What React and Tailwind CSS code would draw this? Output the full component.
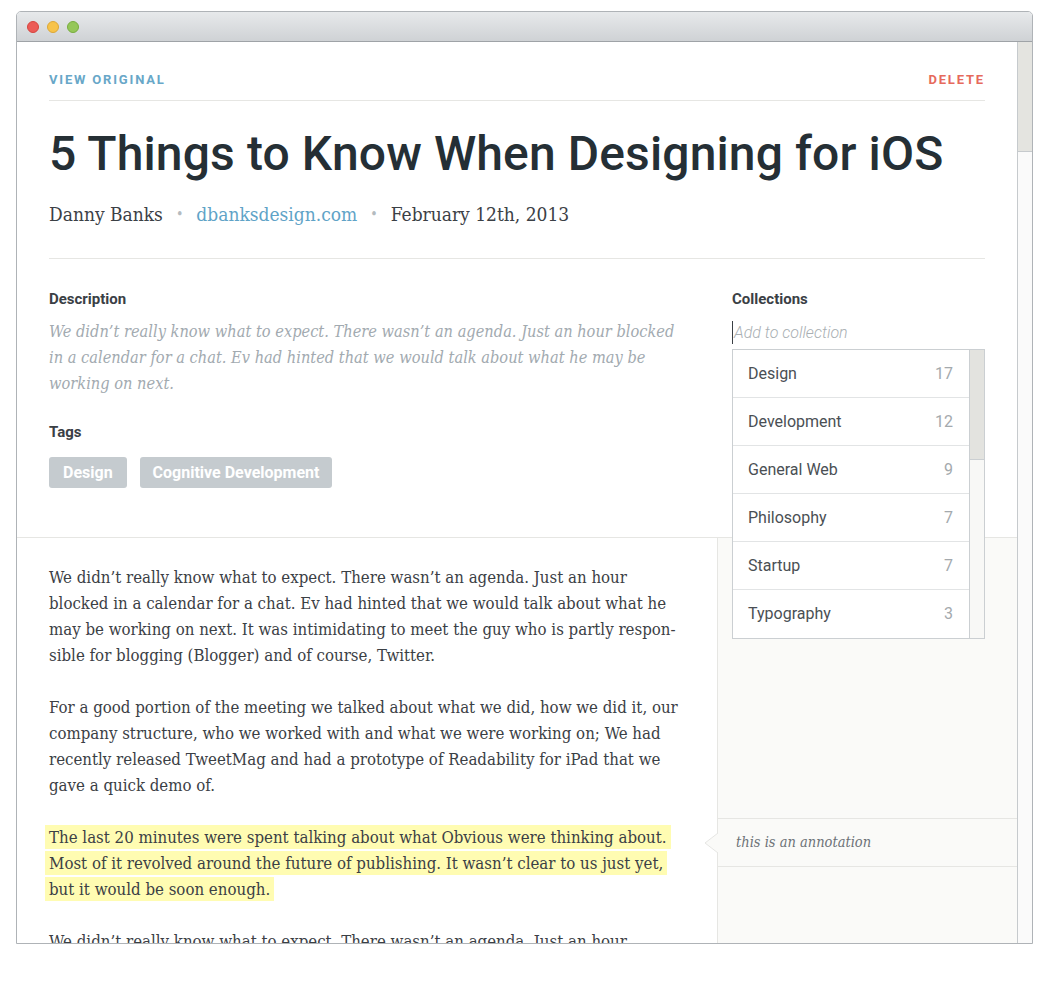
import React from "react";

const collections = [
  { name: "Design", count: 17 },
  { name: "Development", count: 12 },
  { name: "General Web", count: 9 },
  { name: "Philosophy", count: 7 },
  { name: "Startup", count: 7 },
  { name: "Typography", count: 3 },
];

const serif = "font-['DejaVu_Serif_Condensed','DejaVu_Serif',serif] font-stretch-condensed";
const sans = "font-['Roboto','Liberation_Sans',sans-serif]";

function TitleBar() {
  return (
    <div className="h-[30px] shrink-0 flex items-center gap-2 px-[10px] border-b border-[#9fa3a7] bg-gradient-to-b from-[#e7e9eb] to-[#cfd2d5]">
      <span className="w-3 h-3 rounded-full bg-[#ec5b57] border border-[#d5453f]" />
      <span className="w-3 h-3 rounded-full bg-[#f7c34a] border border-[#dca837]" />
      <span className="w-3 h-3 rounded-full bg-[#95c759] border border-[#78ad3e]" />
    </div>
  );
}

function CollectionsPicker() {
  return (
    <div className="relative">
      <div className="h-[23px] border-l border-[#3a3f44] pl-px text-[16px] leading-[23px] italic font-light text-[#a9afb3]">
        Add to collection
      </div>
      {/* Dropdown */}
      <div className="absolute left-0 top-[28px] w-[253px] h-[290px] flex border border-[#cbcfd2] bg-white z-10">
        <ul className="flex-1">
          {collections.map((c, i) => (
            <li
              key={c.name}
              className={`h-12 flex items-center justify-between pl-[15px] pr-4 text-[16px] text-[#4a4f54] ${
                i < collections.length - 1 ? "border-b border-[#e2e4e5]" : ""
              }`}
            >
              <span>{c.name}</span>
              <span className="text-[#a4a9ad]">{c.count}</span>
            </li>
          ))}
        </ul>
        <div className="w-[15px] border-l border-[#cbcfd2] bg-[#f8f8f6] flex flex-col">
          <div className="h-[110px] bg-[#e3e3df] border-b border-[#cbcfd2]" />
        </div>
      </div>
    </div>
  );
}

export default function App() {
  return (
    <div className={`min-h-[1000px] bg-white pt-[11px] pl-4 ${sans}`}>
      <div className="w-[1017px] h-[933px] flex flex-col border border-[#afb3b7] rounded-t-[5px] overflow-hidden bg-white">
        <TitleBar />

        <div className="flex-1 flex min-h-0">
          <div className="flex-1 flex flex-col overflow-hidden">
            {/* Header */}
            <div className="px-8">
              <div className="flex items-center justify-between pt-[30px] pb-[12px] border-b border-[#e6e6e3] text-[13px] leading-4 font-bold tracking-[0.14em] uppercase">
                <a className="text-[#68a7c8]">View original</a>
                <a className="text-[#e66a5c]">Delete</a>
              </div>

              <h1 className="mt-[25px] text-[48px] leading-[56px] font-medium text-[#252f35] tracking-[0.12px]">
                5 Things to Know When Designing for iOS
              </h1>

              <div className={`mt-[18px] pb-[30px] flex items-center gap-[13px] text-[19px] leading-7 text-[#3b4045] border-b border-[#e6e6e3] ${serif}`}>
                <span>Danny Banks</span>
                <span className="text-[#b4bbc0] text-[14px]">•</span>
                <a className="text-[#5fa3c7]">dbanksdesign.com</a>
                <span className="text-[#b4bbc0] text-[14px]">•</span>
                <span>February 12th, 2013</span>
              </div>

              <div className="flex gap-[47px] pt-[30px] pb-[49px]">
                <div className="w-[636px]">
                  <h3 className="text-[15px] leading-5 font-bold text-[#3a4045]">Description</h3>
                  <p className={`mt-[10px] text-[16.25px] leading-[26px] italic text-[#a2aab0] ${serif}`}>
                    We didn’t really know what to expect. There wasn’t an agenda. Just an hour blocked in a calendar for a chat. Ev had hinted that we would talk about what he may be working on next.
                  </p>
                  <h3 className="mt-[25px] text-[15px] leading-5 font-bold text-[#3a4045]">Tags</h3>
                  <div className="mt-[15px] flex gap-[13px]">
                    <span className="h-[31px] px-[14px] flex items-center rounded-[3px] bg-[#c5cbcf] text-white text-[16px] font-bold">Design</span>
                    <span className="h-[31px] px-[13px] flex items-center rounded-[3px] bg-[#c5cbcf] text-white text-[16px] font-bold">Cognitive Development</span>
                  </div>
                </div>
                <div className="w-[253px]">
                  <h3 className="text-[15px] leading-5 font-bold text-[#3a4045]">Collections</h3>
                  <div className="mt-[12px]">
                    <CollectionsPicker />
                  </div>
                </div>
              </div>
            </div>

            {/* Article */}
            <div className="flex-1 flex border-t border-[#e6e6e3] min-h-0">
              <div className={`w-[700px] px-8 pt-[26px] text-[16.7px] leading-[26px] text-[#3b4045] ${serif}`}>
                <p>
                  We didn’t really know what to expect. There wasn’t an agenda. Just an hour blocked in a calendar for a chat. Ev had hinted that we would talk about what he may be working on next. It was intimidating to meet the guy who is partly respon&shy;sible for blogging (Blogger) and of course, Twitter.
                </p>
                <p className="mt-[26px]">
                  For a good portion of the meeting we talked about what we did, how we did it, our company structure, who we worked with and what we were working on; We had recently released TweetMag and had a prototype of Readability for iPad that we gave a quick demo of.
                </p>
                <p className="mt-[26px]">
                  <span className="bg-[#fffcb2] px-1 -mx-1 py-[2px] box-decoration-clone">
                    The last 20 minutes were spent talking about what Obvious were thinking about. Most of it revolved around the future of publishing. It wasn’t clear to us just yet, but it would be soon enough.
                  </span>
                </p>
                <p className="mt-[26px]">
                  We didn’t really know what to expect. There wasn’t an agenda. Just an hour blocked in a calendar for a chat. Ev had hinted that we would talk about what he may be working on next.
                </p>
              </div>

              <aside className="flex-1 relative border-l border-[#e6e6e3] bg-[#fafaf8]">
                {/* Annotation anchored to highlight */}
                <div className="absolute left-0 right-0 top-[280px] h-[49px] border-y border-[#e6e6e3] flex items-center pl-[18px]">
                  <span className={`text-[14.5px] italic text-[#6d7277] ${serif}`}>this is an annotation</span>
                  <svg className="absolute -left-[14px] top-[14px]" width="15" height="20" viewBox="0 0 15 20">
                    <path d="M14 0 L1 10 L14 20" fill="#fafaf8" stroke="#e6e6e3" />
                  </svg>
                </div>
              </aside>
            </div>
          </div>

          {/* Window scrollbar */}
          <div className="w-[15px] shrink-0 border-l border-[#c6cacd] bg-[#fafafa] flex flex-col">
            <div className="h-[110px] bg-[#e4e4e0] border-b border-[#c6cacd]" />
          </div>
        </div>
      </div>
    </div>
  );
}
